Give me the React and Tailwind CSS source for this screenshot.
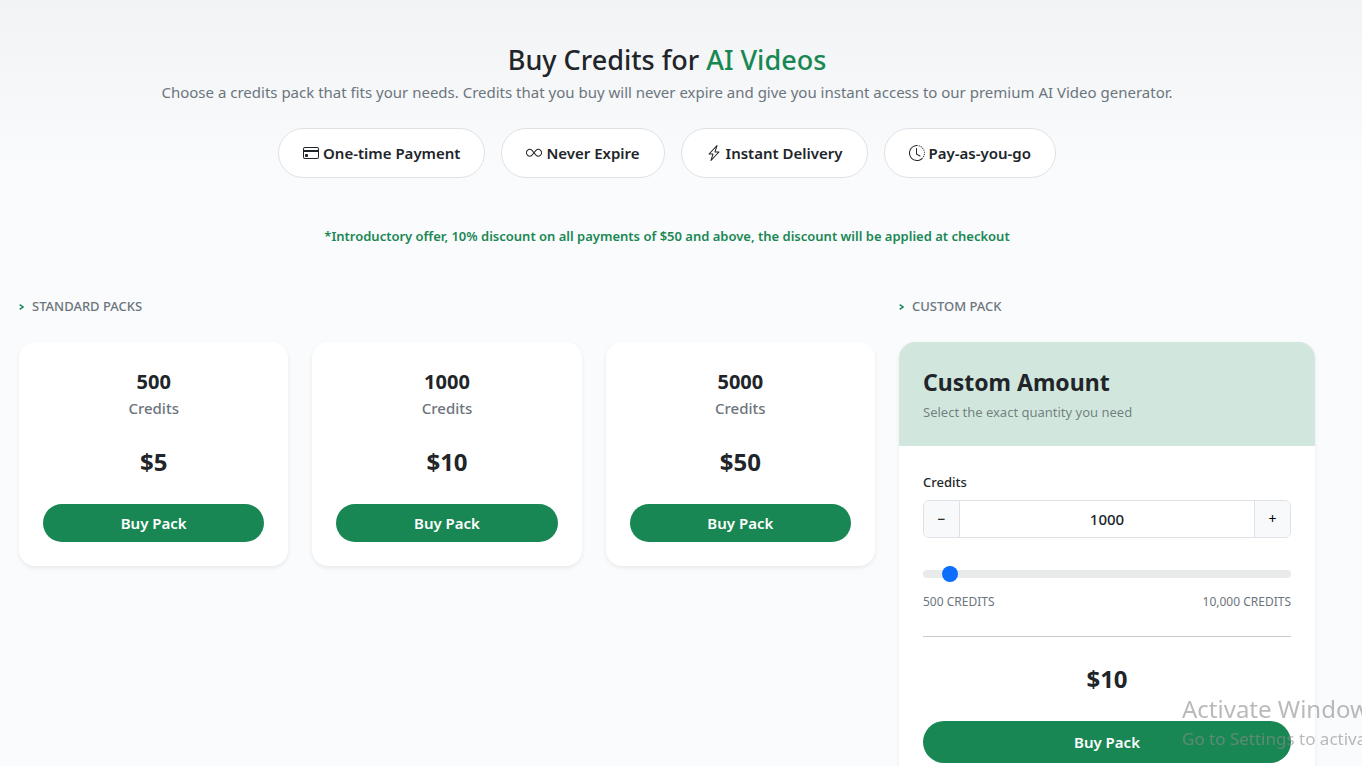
import { useState } from "react";
import { BsCreditCard, BsInfinity, BsLightningCharge, BsClockHistory } from "react-icons/bs";

const MIN_CREDITS = 500;
const MAX_CREDITS = 10000;
const STEP = 100;

const features = [
  { icon: BsCreditCard, label: "One-time Payment" },
  { icon: BsInfinity, label: "Never Expire" },
  { icon: BsLightningCharge, label: "Instant Delivery" },
  { icon: BsClockHistory, label: "Pay-as-you-go" },
];

const packs = [
  { credits: 500, price: 5 },
  { credits: 1000, price: 10 },
  { credits: 5000, price: 50 },
];

function SectionTitle({ children }) {
  return (
    <h2 className="mb-6 flex items-center gap-2 text-[13px] leading-6 font-medium text-[#6c757d] uppercase">
      <svg viewBox="0 0 5 6" fill="none" stroke="currentColor" strokeWidth="1.5" className="mt-0.5 h-1.5 w-[5px] text-[#198754]">
        <path d="M0.7 0.6L4 3L0.7 5.4" />
      </svg>
      {children}
    </h2>
  );
}

function PackCard({ credits, price }) {
  return (
    <div className="rounded-2xl bg-white p-6 text-center shadow-[0_2px_4px_rgba(0,0,0,0.075)]">
      <h3 className="text-xl leading-8 font-bold">{credits}</h3>
      <p className="text-[15px] leading-5 font-medium text-[#6c757d]">Credits</p>
      <p className="mt-[26px] mb-6 text-2xl leading-9 font-bold">${price}</p>
      <button className="block h-[38px] w-full rounded-full bg-[#198754] text-[15px] font-semibold text-white hover:bg-[#157347]">
        Buy Pack
      </button>
    </div>
  );
}

function CustomPack() {
  const [credits, setCredits] = useState(1000);

  const update = (value) => setCredits(Math.min(MAX_CREDITS, Math.max(MIN_CREDITS, Number(value) || MIN_CREDITS)));

  return (
    <div className="overflow-hidden rounded-2xl bg-white shadow-[0_2px_4px_rgba(0,0,0,0.075)]">
      <div className="bg-[#d1e7dd] p-6">
        <h3 className="mb-1 text-[23px] leading-8 font-bold">Custom Amount</h3>
        <p className="text-[13px] leading-5 text-[#212529]/55">Select the exact quantity you need</p>
      </div>

      <div className="p-6">
        <label htmlFor="credits" className="mb-1.5 block text-[13px] leading-6 font-medium">
          Credits
        </label>
        {/* Stepper */}
        <div className="flex h-[38px] overflow-hidden rounded-md border border-[#dee2e6]">
          <button
            onClick={() => update(credits - STEP)}
            className="w-9 border-r border-[#dee2e6] bg-[#f8f9fa] text-sm text-black"
            aria-label="Decrease credits"
          >
            −
          </button>
          <input
            id="credits"
            type="text"
            inputMode="numeric"
            value={credits}
            onChange={(e) => update(e.target.value)}
            className="min-w-0 flex-1 text-center text-[15px] font-medium outline-none"
          />
          <button
            onClick={() => update(credits + STEP)}
            className="w-9 border-l border-[#dee2e6] bg-[#f8f9fa] text-sm text-black"
            aria-label="Increase credits"
          >
            +
          </button>
        </div>

        {/* Slider */}
        <div className="mt-6 flex h-6 items-center">
          <input
            type="range"
            min={MIN_CREDITS}
            max={MAX_CREDITS}
            step={STEP}
            value={credits}
            onChange={(e) => update(e.target.value)}
            aria-label="Credits"
            className="h-2 w-full cursor-pointer appearance-none rounded-full bg-[#e9ebeb] [&::-webkit-slider-thumb]:h-4 [&::-webkit-slider-thumb]:w-4 [&::-webkit-slider-thumb]:appearance-none [&::-webkit-slider-thumb]:rounded-full [&::-webkit-slider-thumb]:bg-[#0d6efd]"
          />
        </div>
        <div className="mt-1.5 flex justify-between text-xs leading-5 text-[#6c757d] uppercase">
          <span>500 credits</span>
          <span>10,000 credits</span>
        </div>

        <hr className="my-6 border-[#c8cacb]" />

        <p className="mb-6 text-center text-2xl leading-9 font-bold">${Math.round(credits / 100)}</p>
        <button className="block h-[42px] w-full rounded-full bg-[#198754] text-[15px] font-semibold text-white hover:bg-[#157347]">
          Buy Pack
        </button>
      </div>
    </div>
  );
}

export default function App() {
  return (
    <div className="min-h-screen bg-[#f9fbfc] bg-linear-to-b from-[#f1f3f4] to-[#f9fbfc] to-[170px] pt-11 pr-7 font-['Noto_Sans','Open_Sans',sans-serif] text-[#212529]">
      <div className="mx-auto max-w-[1320px] px-3 pb-6">
        {/* Header */}
        <header className="text-center">
          <h1 className="mb-1 text-[27px] leading-8 font-medium">
            Buy Credits for <span className="text-[#198754]">AI Videos</span>
          </h1>
          <p className="text-[15px] leading-6 text-[#6c757d]">
            Choose a credits pack that fits your needs. Credits that you buy will never expire and give you instant
            access to our premium AI Video generator.
          </p>
          <ul className="mt-6 flex flex-wrap justify-center gap-4">
            {features.map(({ icon: Icon, label }) => (
              <li
                key={label}
                className="flex h-[50px] items-center gap-1 rounded-full border border-[#dee2e6] bg-white px-6 text-[15px] font-semibold"
              >
                <Icon className="h-4 w-4" />
                {label}
              </li>
            ))}
          </ul>
          <p className="my-12 text-[13px] leading-5 font-semibold text-[#198754]">
            *Introductory offer, 10% discount on all payments of $50 and above, the discount will be applied at checkout
          </p>
        </header>

        {/* Packs */}
        <main className="grid grid-cols-1 items-start gap-6 lg:grid-cols-3">
          <section className="lg:col-span-2">
            <SectionTitle>Standard Packs</SectionTitle>
            <div className="grid grid-cols-1 gap-6 sm:grid-cols-3">
              {packs.map((pack) => (
                <PackCard key={pack.credits} {...pack} />
              ))}
            </div>
          </section>
          <section>
            <SectionTitle>Custom Pack</SectionTitle>
            <CustomPack />
          </section>
        </main>
      </div>

      {/* System watermark */}
      <div className="pointer-events-none fixed right-0 bottom-[13px] w-[180px] overflow-hidden whitespace-nowrap text-[#8c8c8c]/60">
        <p className="text-2xl leading-8">Activate Windows</p>
        <p className="text-[17px] leading-7">Go to Settings to activate Windows.</p>
      </div>
    </div>
  );
}
